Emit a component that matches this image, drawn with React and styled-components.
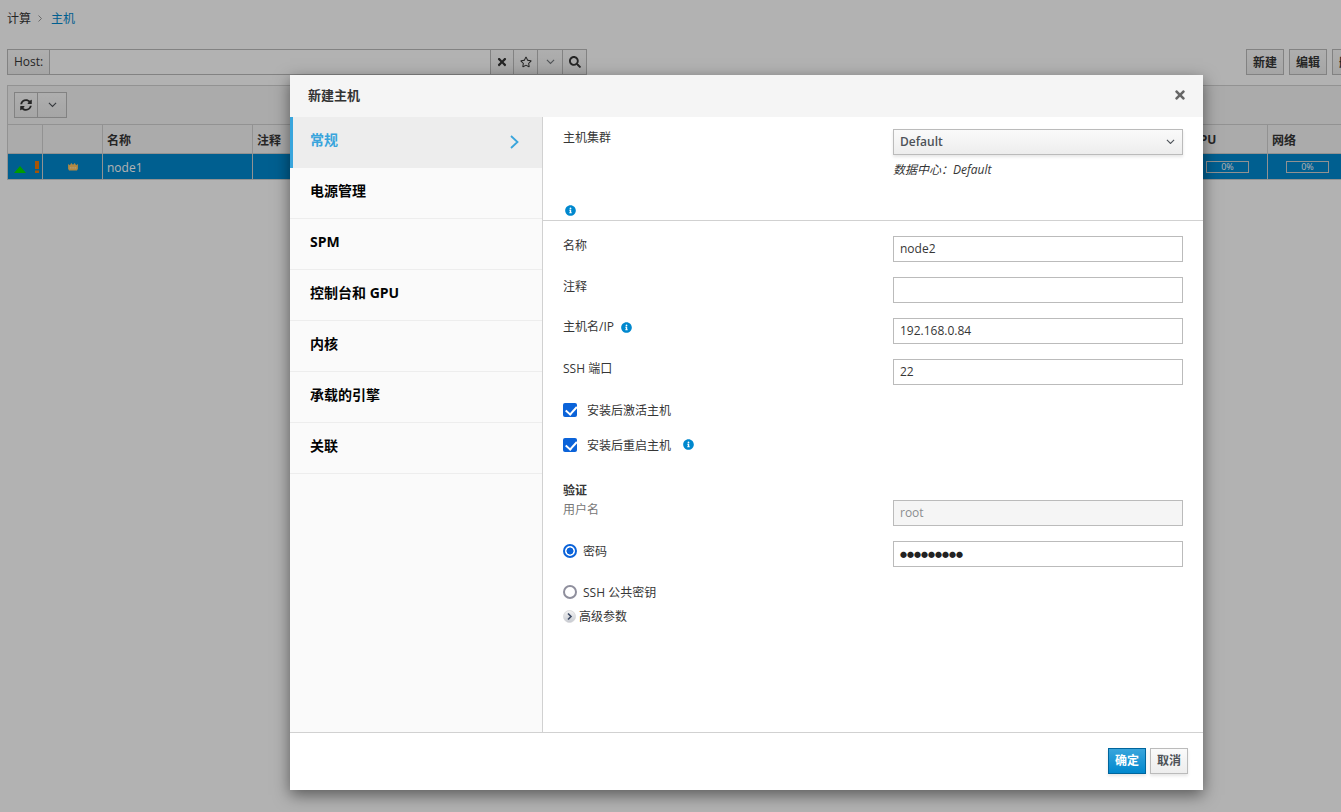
import React from 'react';
import styled, { createGlobalStyle } from 'styled-components';
import { FaTimes, FaRegStar, FaSearch, FaSyncAlt, FaInfoCircle } from 'react-icons/fa';

const Global = createGlobalStyle`
  html, body { margin: 0; padding: 0; height: 100%; overflow: hidden; background: #fff; }
  body { font-family: "Open Sans", "Noto Sans CJK SC", sans-serif; font-size: 12px; color: #363636; }
  * { box-sizing: border-box; }
`;

const Page = styled.div`
  position: relative;
  width: 1341px;
  height: 812px;
  overflow: hidden;
  padding: 0 0 0 7px;
`;
const Crumbs = styled.div`
  display: flex;
  align-items: center;
  height: 49px;
  padding-bottom: 13px;
  font-size: 12px;
  gap: 7px;
`;
const CrumbLink = styled.span`
  color: #0088ce;
  margin-left: 2px;
`;
const grad = `background: linear-gradient(to bottom, #fafafa, #ededed);`;
const SearchRow = styled.div`
  display: flex;
  height: 26px;
  margin-bottom: 10px;
`;
const HostLabel = styled.div`
  flex: none;
  width: 43px;
  border: 1px solid #bbb;
  ${grad}
  display: flex;
  align-items: center;
  justify-content: center;
  font-size: 12px;
  padding-bottom: 2px;
`;
const SearchInput = styled.div`
  flex: none;
  width: 441px;
  border: 1px solid #bbb;
  border-left: 0;
  background: #fff;
`;
const SearchBtn = styled.div`
  flex: none;
  width: ${p => p.$w}px;
  border: 1px solid #bbb;
  border-left: 0;
  ${grad}
  display: flex;
  align-items: center;
  justify-content: center;
  color: #363636;
  font-size: 12px;
`;
const ActionBtns = styled.div`
  display: flex;
  gap: 5px;
  margin-left: 659px;
  flex: none;
`;
const ActionBtn = styled.div`
  flex: none;
  width: 38px;
  height: 26px;
  border: 1px solid #bbb;
  ${grad}
  display: flex;
  align-items: center;
  justify-content: center;
  font-weight: 600;
  font-size: 12px;
`;
const Panel = styled.div`
  border: 1px solid #d1d1d1;
  border-right: 0;
`;
const Toolbar = styled.div`
  height: 38px;
  background: #f5f5f5;
  display: flex;
  align-items: center;
  padding-left: 6px;
`;
const ToolBtn = styled.div`
  width: ${p => p.$w}px;
  height: 26px;
  border: 1px solid #bbb;
  margin-left: ${p => (p.$joined ? '-1px' : '0')};
  ${grad}
  display: flex;
  align-items: center;
  justify-content: center;
  color: #363636;
`;
const GridRow = styled.div`
  display: grid;
  grid-template-columns: 35px 60px 150px 935px 80px 80px;
  height: ${p => p.$h}px;
  background: ${p => (p.$sel ? '#0088ce' : '#f5f5f5')};
  border-top: 1px solid #d1d1d1;
  color: ${p => (p.$sel ? '#fff' : '#363636')};
`;
const Cell = styled.div`
  border-right: 1px solid #d1d1d1;
  display: flex;
  align-items: center;
  justify-content: ${p => (p.$center ? 'center' : 'flex-start')};
  padding-left: ${p => (p.$center ? 0 : 4)}px;
  padding-top: 1px;
  font-weight: ${p => (p.$head ? 700 : 400)};
  overflow: hidden;
  white-space: nowrap;
`;
const StatusCell = styled(Cell)`
  padding-left: 6px;
  gap: 9px;
`;
const Bar = styled.div`
  width: 43px;
  height: 12px;
  border: 1px solid #d0d0d0;
  font-size: 9px;
  line-height: 9px;
  text-align: center;
  color: #fff;
`;
const Overlay = styled.div`
  position: absolute;
  inset: 0;
  background: rgba(0, 0, 0, 0.3);
`;
const Modal = styled.div`
  position: absolute;
  left: 290px;
  top: 75px;
  width: 913px;
  height: 715px;
  background: #fff;
  box-shadow: 0 5px 15px rgba(0, 0, 0, 0.5);
  display: flex;
  flex-direction: column;
`;
const ModalHead = styled.div`
  height: 42px;
  flex: none;
  background: #f5f5f5;
  display: flex;
  align-items: center;
  justify-content: space-between;
  padding: 0 16px 3px 18px;
  font-size: 13px;
  font-weight: 600;
  color: #333;
`;
const CloseIcon = styled.span`
  display: flex;
  color: #666;
  font-size: 14px;
`;
const ModalBody = styled.div`
  flex: 1;
  display: flex;
  min-height: 0;
`;
const Side = styled.div`
  width: 253px;
  flex: none;
  background: #fafafa;
  border-right: 1px solid #d1d1d1;
`;
const SideItem = styled.div`
  height: 51px;
  display: flex;
  align-items: center;
  justify-content: space-between;
  padding: 0 23px 2px ${p => (p.$active ? '17px' : '20px')};
  font-size: 14px;
  font-weight: 700;
  color: ${p => (p.$active ? '#39a5dc' : '#030303')};
  background: ${p => (p.$active ? '#ededed' : 'transparent')};
  border-left: ${p => (p.$active ? '3px solid #39a5dc' : '0')};
  border-bottom: ${p => (p.$active ? '0' : '1px solid #ededed')};
`;
const SideText = styled.span`
  position: relative;
  top: ${p => (p.$active ? -3 : -2)}px;
`;
const Content = styled.div`
  flex: 1;
  min-width: 0;
  display: flex;
  flex-direction: column;
`;
const ClusterBlock = styled.div`
  height: 104px;
  flex: none;
  border-bottom: 1px solid #d1d1d1;
  padding: 12px 20px 0;
  position: relative;
`;
const ClusterRow = styled.div`
  display: flex;
  justify-content: space-between;
  align-items: flex-start;
`;
const Label = styled.div`
  font-size: 12px;
  color: ${p => (p.$muted ? '#777' : '#363636')};
  display: flex;
  align-items: center;
  gap: 7px;
  line-height: 18px;
  margin-top: ${p => p.$top || 0}px;
`;
const SelectBox = styled.div`
  width: 290px;
  height: 26px;
  border: 1px solid #bbb;
  ${grad}
  box-shadow: 0 2px 3px rgba(3, 3, 3, 0.1);
  display: flex;
  align-items: center;
  justify-content: space-between;
  padding: 0 7px 1px 6px;
  font-weight: 600;
  font-size: 12px;
  color: #4d5258;
`;
const Hint = styled.div`
  margin: 6px 0 0 330px;
  font-style: italic;
  font-size: 12px;
  line-height: 18px;
  color: #363636;
`;
const InfoSlot = styled.div`
  position: absolute;
  left: 22px;
  bottom: 4px;
  display: flex;
`;
const Info = styled(FaInfoCircle)`
  color: #0088ce;
  font-size: 11px;
  flex: none;
`;
const Form = styled.div`
  padding: 15px 20px 0;
  display: flex;
  flex-direction: column;
`;
const FieldRow = styled.div`
  display: flex;
  justify-content: space-between;
  align-items: flex-start;
  height: ${p => p.$h || 41}px;
`;
const Field = styled.div`
  width: 290px;
  height: 26px;
  margin-top: ${p => p.$top || 0}px;
  border: 1px solid #bbb;
  background: ${p => (p.$off ? '#f5f5f5' : '#fff')};
  color: ${p => (p.$off ? '#8b8d8f' : '#363636')};
  padding: 0 6px 2px;
  display: flex;
  align-items: center;
  font-size: 12px;
`;
const Dots = styled.span`
  font-size: 7px;
  color: #222;
  position: relative;
  top: 1px;
`;
const CheckRow = styled.label`
  display: flex;
  align-items: center;
  height: 35px;
  gap: 10px;
`;
const Check = styled.input`
  appearance: none;
  margin: 0;
  width: 14px;
  height: 14px;
  border-radius: 2px;
  background: #0b63d9;
  position: relative;
  flex: none;
  &::after {
    content: '';
    position: absolute;
    left: 4.5px;
    top: 1.5px;
    width: 5px;
    height: 8.5px;
    border: solid #fff;
    border-width: 0 2px 2px 0;
    transform: rotate(42deg);
  }
`;
const Heading = styled.div`
  font-weight: 700;
  font-size: 12px;
  line-height: 15px;
  margin-top: 21px;
`;
const RadioLabel = styled.label`
  display: flex;
  align-items: center;
  gap: 6px;
  height: 26px;
  margin-top: -3px;
`;
const Radio = styled.input`
  appearance: none;
  margin: 0;
  width: 14px;
  height: 14px;
  border-radius: 50%;
  border: 2px solid #8f8f9d;
  background: #fff;
  flex: none;
  &:checked {
    border-color: #0b63d9;
    background: radial-gradient(circle, #0b63d9 0 3.2px, #fff 3.8px);
  }
`;
const Advanced = styled.div`
  display: flex;
  align-items: center;
  gap: 3px;
  height: 18px;
`;
const Foot = styled.div`
  height: 58px;
  flex: none;
  border-top: 1px solid #d1d1d1;
  display: flex;
  align-items: center;
  justify-content: flex-end;
  gap: 4px;
  padding: 0 15px 2px 0;
`;
const Primary = styled.div`
  width: 38px;
  height: 26px;
  border: 1px solid #00659c;
  background: linear-gradient(to bottom, #39a5dc, #0088ce);
  color: #fff;
  font-weight: 600;
  font-size: 12px;
  display: flex;
  align-items: center;
  justify-content: center;
  padding-bottom: 2px;
  box-shadow: 0 2px 3px rgba(3, 3, 3, 0.1);
`;
const Secondary = styled(Primary)`
  border-color: #bbb;
  background: linear-gradient(to bottom, #fafafa, #ededed);
  color: #4d5258;
`;

const Chevron = ({ size = 9, color = '#4d5258' }) => (
  <svg width={size} height={size * 0.6} viewBox="0 0 10 6"><path d="M1 1l4 4 4-4" fill="none" stroke={color} strokeWidth="1.2" /></svg>
);
const CrumbArrow = () => (
  <svg width="4" height="7" viewBox="0 0 4 7"><path d="M.5.500l3 3-3 3" fill="none" stroke="#999" strokeWidth="1" /></svg>
);
const SideArrow = () => (
  <svg width="9" height="14" viewBox="0 0 9 14"><path d="M1 1l6.500 6L1 13" fill="none" stroke="#39a5dc" strokeWidth="1.8" /></svg>
);
const UpTriangle = () => (
  <svg width="12" height="11" viewBox="0 0 12 11"><path d="M6 4l6 7H0z" fill="#00e000" /></svg>
);
const Bang = () => (
  <svg width="4" height="12" viewBox="0 0 4 12"><path d="M0 0h4v8H0zM0 9.500h4V12H0z" fill="#ec7a08" /></svg>
);
const Crown = () => (
  <svg width="12" height="8" viewBox="0 0 11 9"><path d="M0 1l2 1.500L3.500 0l2 2L7.500 0 9 2.500 11 1v5.500l-1 2H1l-1-2z" fill="#ffc560" /><path d="M2 5.500h7" stroke="#fff" strokeWidth="1" strokeDasharray="1 1" /></svg>
);
const AdvancedIcon = () => (
  <svg width="13" height="13" viewBox="0 0 13 13">
    <defs><linearGradient id="adv" x1="0" y1="0" x2="0" y2="1"><stop offset="0" stopColor="#f4f4f4" /><stop offset="1" stopColor="#c6c9d0" /></linearGradient></defs>
    <circle cx="6.500" cy="6.500" r="6" fill="url(#adv)" stroke="#d5d5d8" strokeWidth="0.8" />
    <path d="M5 3.500l3 3-3 3" fill="none" stroke="#3c4a63" strokeWidth="1.6" />
  </svg>
);

const sideItems = ['常规', '电源管理', 'SPM', '控制台和 GPU', '内核', '承载的引擎', '关联'];

export default function App() {
  return (
    <Page>
      <Global />
      <Crumbs>
        <span>计算</span>
        <CrumbArrow />
        <CrumbLink>主机</CrumbLink>
      </Crumbs>
      <SearchRow>
        <HostLabel>Host:</HostLabel>
        <SearchInput />
        <SearchBtn $w={23}><FaTimes /></SearchBtn>
        <SearchBtn $w={24}><FaRegStar /></SearchBtn>
        <SearchBtn $w={25}><Chevron color="#72767b" /></SearchBtn>
        <SearchBtn $w={24}><FaSearch /></SearchBtn>
        <ActionBtns>
          <ActionBtn>新建</ActionBtn>
          <ActionBtn>编辑</ActionBtn>
          <ActionBtn>删除</ActionBtn>
        </ActionBtns>
      </SearchRow>
      <Panel>
        <Toolbar>
          <ToolBtn $w={24}><FaSyncAlt size={12} /></ToolBtn>
          <ToolBtn $w={30} $joined><Chevron /></ToolBtn>
        </Toolbar>
        <GridRow $h={29}>
          <Cell $head />
          <Cell $head />
          <Cell $head>名称</Cell>
          <Cell $head>注释</Cell>
          <Cell $head>CPU</Cell>
          <Cell $head>网络</Cell>
        </GridRow>
        <GridRow $h={26} $sel>
          <StatusCell><UpTriangle /><Bang /></StatusCell>
          <Cell $center><Crown /></Cell>
          <Cell>node1</Cell>
          <Cell />
          <Cell $center><Bar>0%</Bar></Cell>
          <Cell $center><Bar>0%</Bar></Cell>
        </GridRow>
      </Panel>
      <Overlay />
      <Modal>
        <ModalHead>
          <span>新建主机</span>
          <CloseIcon><FaTimes /></CloseIcon>
        </ModalHead>
        <ModalBody>
          <Side>
            {sideItems.map((s, i) => (
              <SideItem key={s} $active={i === 0}>
                <SideText $active={i === 0}>{s}</SideText>
                {i === 0 && <SideArrow />}
              </SideItem>
            ))}
          </Side>
          <Content>
            <ClusterBlock>
              <ClusterRow>
                <Label>主机集群</Label>
                <SelectBox>Default<Chevron /></SelectBox>
              </ClusterRow>
              <Hint>数据中心：Default</Hint>
              <InfoSlot><Info /></InfoSlot>
            </ClusterBlock>
            <Form>
              <FieldRow><Label $top={1}>名称</Label><Field>node2</Field></FieldRow>
              <FieldRow><Label $top={1}>注释</Label><Field /></FieldRow>
              <FieldRow><Label>主机名/IP <Info /></Label><Field>192.168.0.84</Field></FieldRow>
              <FieldRow $h={33}><Label $top={1}>SSH 端口</Label><Field>22</Field></FieldRow>
              <CheckRow><Check type="checkbox" defaultChecked />安装后激活主机</CheckRow>
              <CheckRow><Check type="checkbox" defaultChecked />安装后重启主机 <Info style={{ marginLeft: 2 }} /></CheckRow>
              <Heading>验证</Heading>
              <FieldRow $h={43}><Label $muted $top={3}>用户名</Label><Field $off $top={2}>root</Field></FieldRow>
              <FieldRow>
                <RadioLabel><Radio type="radio" name="auth" defaultChecked />密码</RadioLabel>
                <Field><Dots>●●●●●●●●●</Dots></Field>
              </FieldRow>
              <FieldRow $h={25}><RadioLabel><Radio type="radio" name="auth" />SSH 公共密钥</RadioLabel></FieldRow>
              <Advanced><AdvancedIcon />高级参数</Advanced>
            </Form>
          </Content>
        </ModalBody>
        <Foot>
          <Primary>确定</Primary>
          <Secondary>取消</Secondary>
        </Foot>
      </Modal>
    </Page>
  );
}
